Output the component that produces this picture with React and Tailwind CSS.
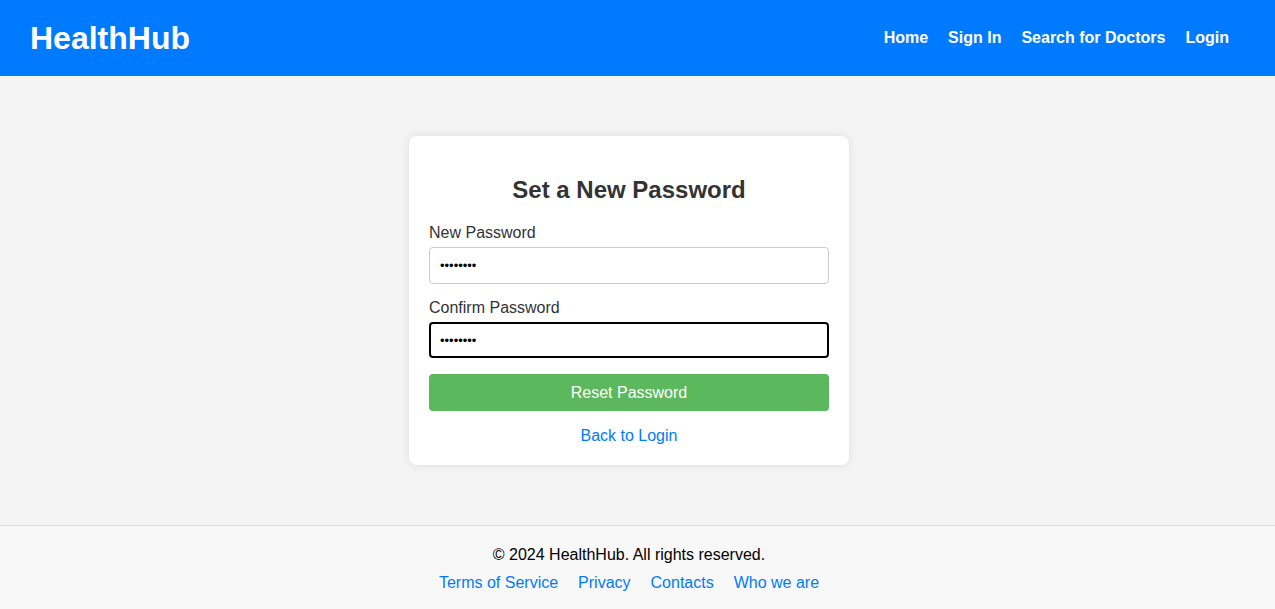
import { useState } from "react";

const font = { fontFamily: '"Liberation Sans", Arial, sans-serif' };

const App = () => {
  const [newPassword, setNewPassword] = useState("password");
  const [confirmPassword, setConfirmPassword] = useState("password");

  return (
    <div className="min-h-screen flex flex-col bg-[#f4f4f4] text-[#333]" style={font}>
      {/* Header */}
      <header className="h-[76px] bg-[#007bff] flex items-center justify-between pl-[30px] pr-[46px]">
        <h1 className="text-[32px] font-bold text-white leading-none">HealthHub</h1>
        <nav className="flex items-center gap-5 text-white font-bold text-base">
          <a href="#">Home</a>
          <a href="#">Sign In</a>
          <a href="#">Search for Doctors</a>
          <a href="#">Login</a>
        </nav>
      </header>

      {/* Main */}
      <main className="flex-1 flex justify-center pt-[60px] pb-[60px] pr-[17px]">
        <div className="w-[440px] bg-white rounded-lg shadow-[0_0_10px_rgba(0,0,0,0.1)] p-5 self-start">
          <h2 className="text-2xl font-bold text-center leading-[28px] mt-5 mb-5">Set a New Password</h2>
          <label className="block text-base leading-[18px] mb-[5px]">New Password</label>
          <input
            type="password"
            value={newPassword}
            onChange={(e) => setNewPassword(e.target.value)}
            className="block w-full h-[37px] border border-[#ccc] rounded px-[10px] text-[13px] text-black bg-white outline-none mb-[15px]"
          />
          <label className="block text-base leading-[18px] mb-[5px]">Confirm Password</label>
          <input
            type="password"
            value={confirmPassword}
            onChange={(e) => setConfirmPassword(e.target.value)}
            className="block w-full h-[36px] border-2 border-black rounded px-[9px] text-[13px] text-black bg-white outline-none mb-4"
          />
          <button className="w-full h-[37px] bg-[#5cb85c] text-white text-base rounded">Reset Password</button>
          <div className="text-center mt-4 leading-[18px]">
            <a href="#" className="text-[#007bff] text-base leading-[18px]">Back to Login</a>
          </div>
        </div>
      </main>

      {/* Footer */}
      <footer className="h-[84px] bg-[#f8f8f8] border-t border-[#ddd] pt-5 pr-[17px] text-center text-black">
        <p className="text-base leading-[18px]">© 2024 HealthHub. All rights reserved.</p>
        <div className="flex justify-center gap-5 mt-[10px] text-base leading-[18px] text-[#007bff]">
          <a href="#">Terms of Service</a>
          <a href="#">Privacy</a>
          <a href="#">Contacts</a>
          <a href="#">Who we are</a>
        </div>
      </footer>
    </div>
  );
};

export default App;
